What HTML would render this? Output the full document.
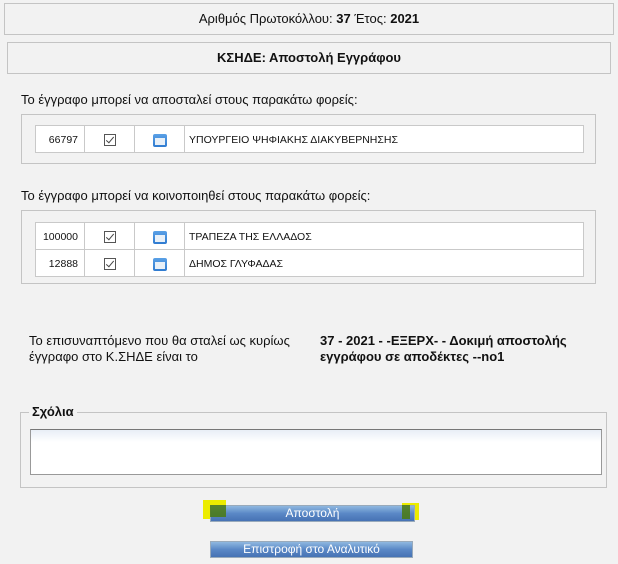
<!DOCTYPE html>
<html><head><meta charset="utf-8"><style>
body{margin:0;width:618px;height:564px;background:#f2f2f2;font-family:"Liberation Sans",Arial,sans-serif;color:#111;position:relative;overflow:hidden}
.a{position:absolute}
.box{position:absolute;border:1px solid #c4c4c4;box-sizing:border-box;text-align:center;font-size:13px}
.fs{position:absolute;border:1px solid #c4c4c4;box-sizing:border-box}
table{position:absolute;border-collapse:collapse;background:#fff;font-size:10.5px}
td{border:1px solid #c9c9c9;height:27px;padding:0;padding-top:2px;box-sizing:border-box}
td.n{width:49px;text-align:right;padding-right:6px}
td.c{width:50px;text-align:center}
td.t{padding-left:4px}
.cb{display:inline-block;width:12px;height:12px;border:1px solid #555;box-sizing:border-box;position:relative;vertical-align:middle;background:#fff}
.cb:after{content:"";position:absolute;left:3px;top:0px;width:3px;height:7px;border:solid #444;border-width:0 1px 1px 0;transform:rotate(40deg)}
.ic{display:inline-block;width:14px;height:13px;border-radius:2px;background:linear-gradient(#5aa0e6,#2f7bd0);vertical-align:middle;position:relative}
.ic:after{content:"";position:absolute;left:2px;top:4px;width:10px;height:7px;background:#e8f0f8}
.btn{position:absolute;height:17px;box-sizing:border-box;border:1px solid #9ab;background:linear-gradient(#8fb8e0,#5a88c6 50%,#4672b4);color:#fff;font-size:12px;text-align:center;line-height:15px}
.p{position:absolute;font-size:13px}
</style></head><body>
<div class="box" style="left:4px;top:3px;width:610px;height:32px;line-height:30px">Αριθμός Πρωτοκόλλου: <b>37</b> Έτος: <b>2021</b></div>
<div class="box" style="left:7px;top:42px;width:604px;height:32px;line-height:30px;font-weight:bold">ΚΣΗΔΕ: Αποστολή Εγγράφου</div>

<div class="p" style="left:21px;top:92px">Το έγγραφο μπορεί να αποσταλεί στους παρακάτω φορείς:</div>
<div class="fs" style="left:21px;top:114px;width:575px;height:50px"></div>
<table style="left:35px;top:125px;width:549px"><tr><td class="n">66797</td><td class="c"><span class="cb"></span></td><td class="c"><span class="ic"></span></td><td class="t">ΥΠΟΥΡΓΕΙΟ ΨΗΦΙΑΚΗΣ ΔΙΑΚΥΒΕΡΝΗΣΗΣ</td></tr></table>

<div class="p" style="left:21px;top:188px">Το έγγραφο μπορεί να κοινοποιηθεί στους παρακάτω φορείς:</div>
<div class="fs" style="left:21px;top:210px;width:575px;height:74px"></div>
<table style="left:35px;top:222px;width:549px"><tr><td class="n">100000</td><td class="c"><span class="cb"></span></td><td class="c"><span class="ic"></span></td><td class="t">ΤΡΑΠΕΖΑ ΤΗΣ ΕΛΛΑΔΟΣ</td></tr>
<tr><td class="n">12888</td><td class="c"><span class="cb"></span></td><td class="c"><span class="ic"></span></td><td class="t">ΔΗΜΟΣ ΓΛΥΦΑΔΑΣ</td></tr></table>

<div class="p" style="left:29px;top:333px;line-height:16px;width:280px">Το επισυναπτόμενο που θα σταλεί ως κυρίως έγγραφο στο Κ.ΣΗΔΕ είναι το</div>
<div class="p" style="left:320px;top:333px;line-height:16px;font-weight:bold;width:285px">37 - 2021 - -ΕΞΕΡΧ- - Δοκιμή αποστολής εγγράφου σε αποδέκτες --no1</div>

<div class="fs" style="left:20px;top:412px;width:587px;height:76px"></div>
<div class="a" style="left:29px;top:404px;background:#f2f2f2;padding:0 3px;font-size:13px;font-weight:bold">Σχόλια</div>
<div class="a" style="left:30px;top:429px;width:572px;height:46px;box-sizing:border-box;border:1px solid #999;border-top-color:#777;background:linear-gradient(#e8eef6,#fff 12px)"></div>

<div class="a" style="left:203px;top:500px;width:23px;height:19px;background:#ecec00"></div>
<div class="a" style="left:402px;top:503px;width:17px;height:17px;background:#ecec00"></div>
<div class="btn" style="left:210px;top:505px;width:205px">Αποστολή</div>
<div class="a" style="left:210px;top:505px;width:16px;height:12px;background:#4a7a10;opacity:.85"></div>
<div class="a" style="left:402px;top:505px;width:8px;height:14px;background:#4a7a10;opacity:.85"></div>
<div class="btn" style="left:210px;top:541px;width:203px">Επιστροφή στο Αναλυτικό</div>
</body></html>
